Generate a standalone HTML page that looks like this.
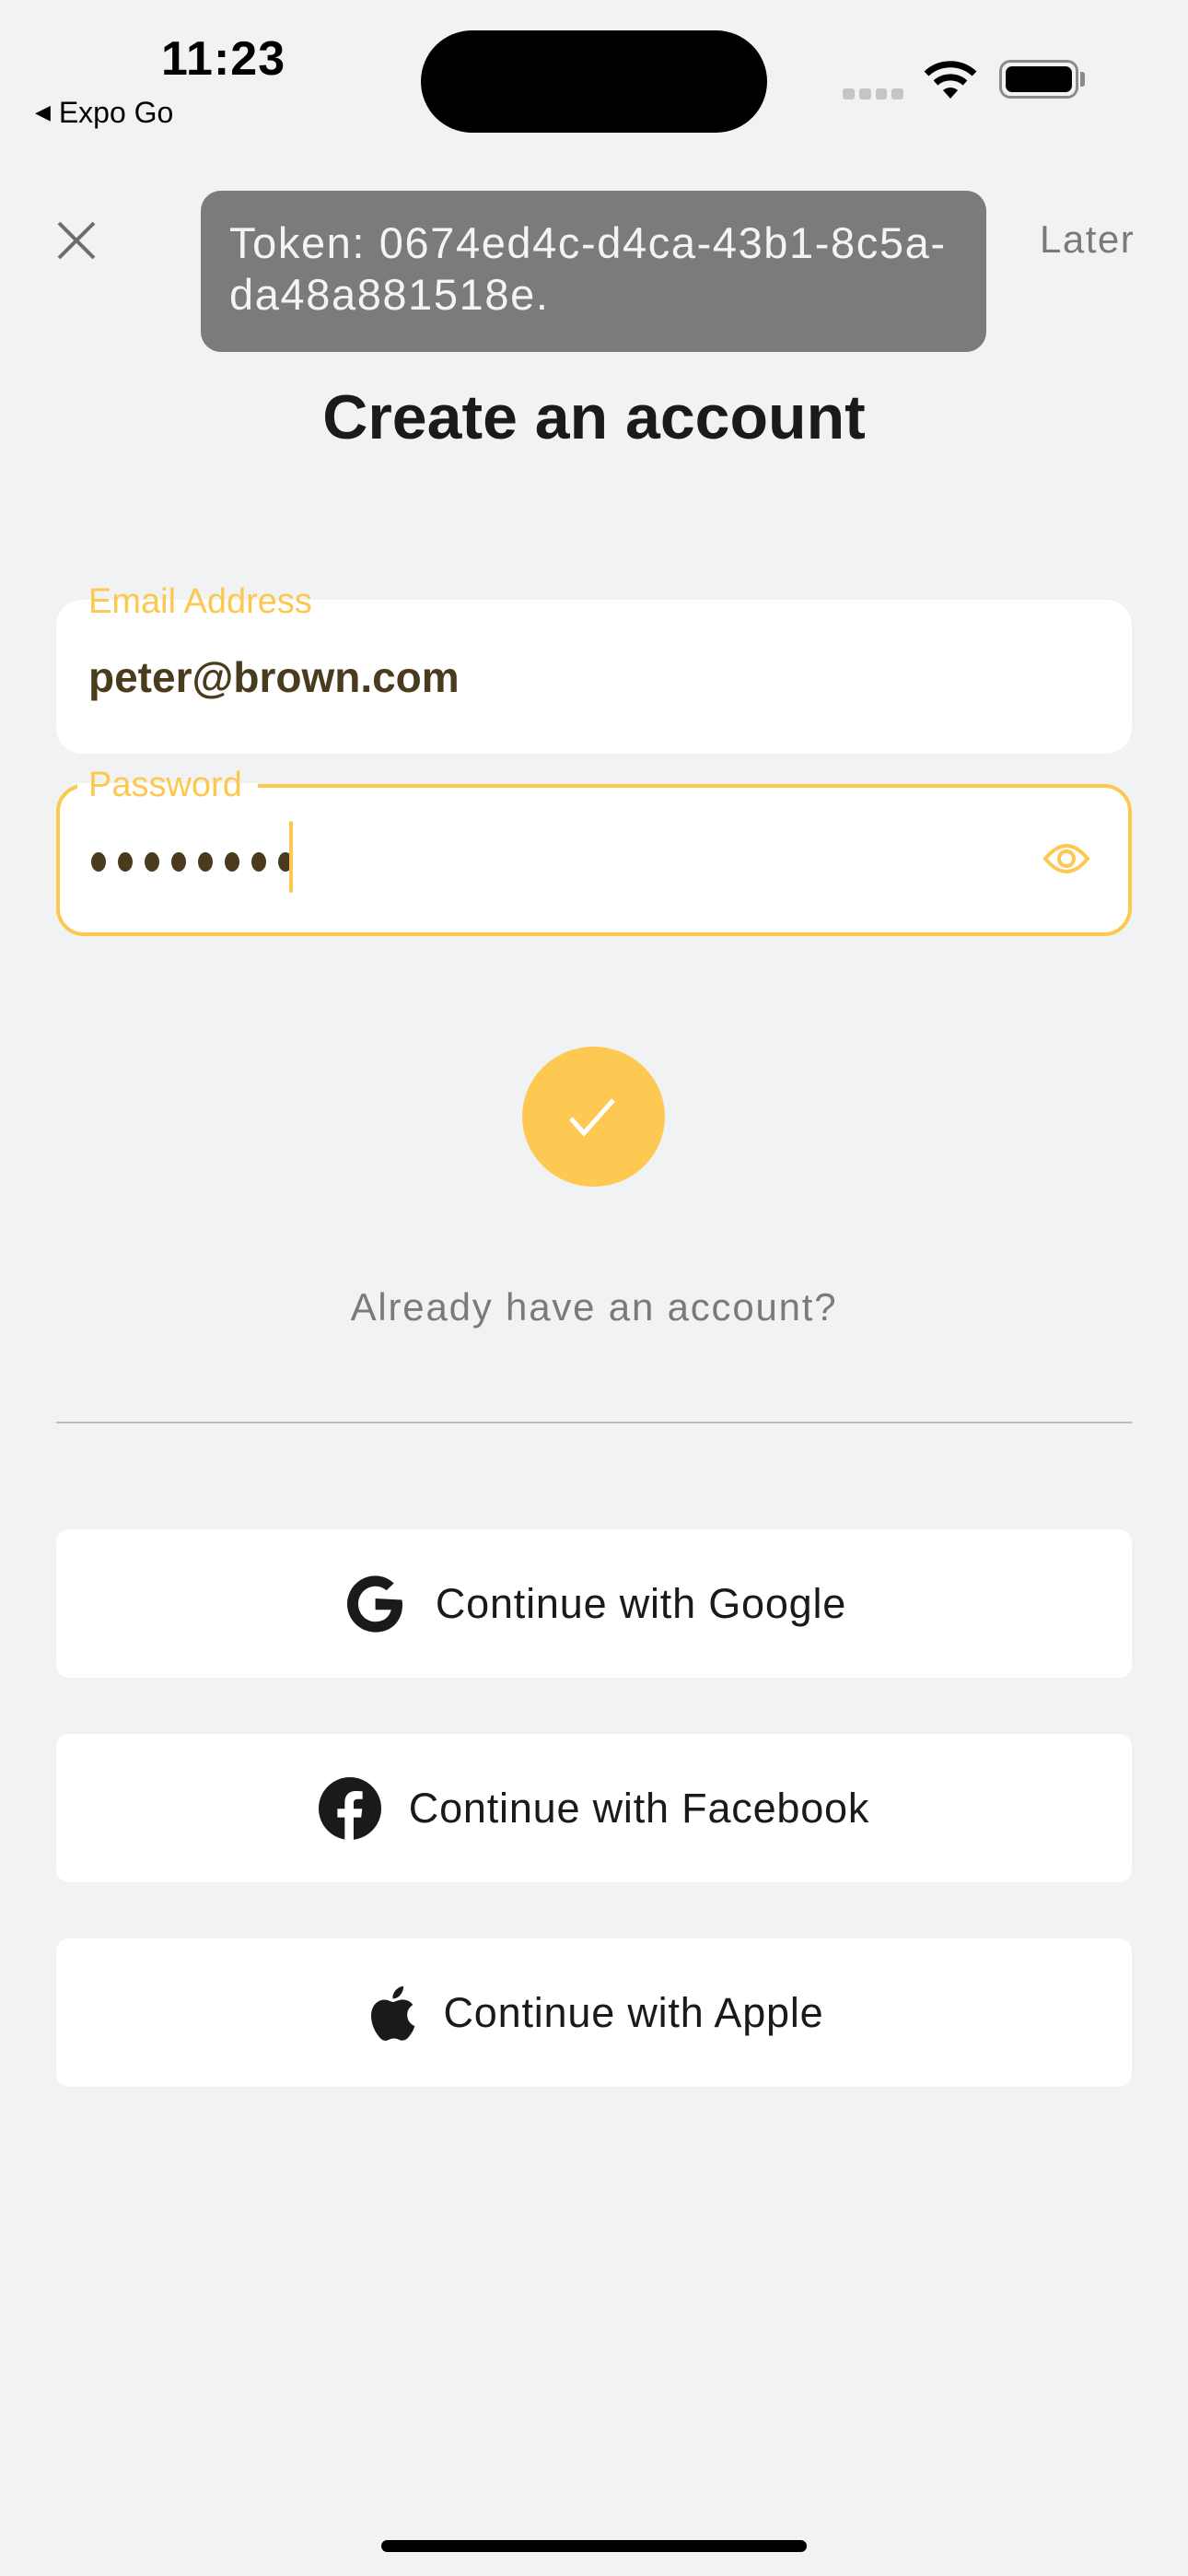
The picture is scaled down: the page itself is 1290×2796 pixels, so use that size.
<!DOCTYPE html>
<html><head><meta charset="utf-8"><style>
*{margin:0;padding:0;box-sizing:border-box}
body{width:1290px;height:2796px;background:#f1f2f4;position:relative;overflow:hidden;font-family:"Liberation Sans",sans-serif}
.a{position:absolute}
.btn{position:absolute;left:61px;width:1168px;height:161px;background:#fff;border-radius:14px;display:flex;align-items:center;justify-content:center;font-size:45px;letter-spacing:0.8px;color:#1a1a1a}
.btn svg{margin-right:30px}
</style></head><body>
<div class="a" style="left:175px;top:34px;font-size:52px;font-weight:bold;color:#000;letter-spacing:1px">11:23</div>
<div class="a" style="left:38px;top:104px;font-size:32px;color:#000"><span style="font-size:22px;position:relative;top:-4px">◀</span> Expo Go</div>
<div class="a" style="left:457px;top:33px;width:376px;height:111px;background:#000;border-radius:56px"></div>
<div class="a" style="left:915px;top:96px;width:66px;height:12px;display:flex;gap:5px"><span style="flex:1;background:#c5c5c5;border-radius:3px"></span><span style="flex:1;background:#c5c5c5;border-radius:3px"></span><span style="flex:1;background:#c5c5c5;border-radius:3px"></span><span style="flex:1;background:#c5c5c5;border-radius:3px"></span></div>
<svg class="a" style="left:1002px;top:64px" width="60" height="44" viewBox="0 0 60 44"><path d="M4 16 A38 38 0 0 1 56 16" stroke="#000" stroke-width="7" fill="none"/><path d="M14 26 A24 24 0 0 1 46 26" stroke="#000" stroke-width="7" fill="none"/><path d="M22 34 L30 43 L38 34 A12 12 0 0 0 22 34Z" fill="#000"/></svg>
<div class="a" style="left:1085px;top:65px;width:86px;height:42px;border:3px solid #8a8a8a;border-radius:12px;padding:4px"><div style="width:100%;height:100%;background:#000;border-radius:7px"></div></div>
<div class="a" style="left:1173px;top:78px;width:5px;height:16px;background:#8a8a8a;border-radius:0 3px 3px 0"></div>
<svg class="a" style="left:62px;top:240px" width="42" height="42" viewBox="0 0 42 42"><path d="M2 2L40 40M40 2L2 40" stroke="#6d6d6d" stroke-width="4"/></svg>
<div class="a" style="left:1129px;top:236px;font-size:42px;letter-spacing:1.5px;color:#7a7a7a">Later</div>
<div class="a" style="left:218px;top:207px;width:853px;height:175px;background:#7b7b7b;border-radius:22px;color:#f4f4f4;font-size:47px;letter-spacing:1.6px;line-height:56px;padding:29px 0 0 31px;white-space:nowrap">Token: 0674ed4c-d4ca-43b1-8c5a-<br>da48a881518e.</div>
<div class="a" style="left:0;top:414px;width:1290px;text-align:center;font-size:68px;color:#1a1a1a;font-weight:bold">Create an account</div>
<div class="a" style="left:61px;top:651px;width:1168px;height:167px;background:#fff;border-radius:28px"></div>
<div class="a" style="left:96px;top:632px;font-size:38px;color:#fdc84e">Email Address</div>
<div class="a" style="left:96px;top:708px;font-size:46px;color:#4a3b1e;font-weight:bold">peter@brown.com</div>
<div class="a" style="left:61px;top:851px;width:1168px;height:165px;background:#fff;border:4px solid #fdc84e;border-radius:30px"></div>
<div class="a" style="left:84px;top:840px;width:196px;height:20px;background:#f1f2f4"></div>
<div class="a" style="left:84px;top:850px;width:196px;height:10px;background:#fff"></div>
<div class="a" style="left:96px;top:831px;font-size:38px;color:#fdc84e">Password</div>
<div class="a" style="left:99px;top:925px;display:flex;gap:13px"><span style="width:16px;height:21px;border-radius:50%;background:#4a3b1e"></span><span style="width:16px;height:21px;border-radius:50%;background:#4a3b1e"></span><span style="width:16px;height:21px;border-radius:50%;background:#4a3b1e"></span><span style="width:16px;height:21px;border-radius:50%;background:#4a3b1e"></span><span style="width:16px;height:21px;border-radius:50%;background:#4a3b1e"></span><span style="width:16px;height:21px;border-radius:50%;background:#4a3b1e"></span><span style="width:16px;height:21px;border-radius:50%;background:#4a3b1e"></span><span style="width:16px;height:21px;border-radius:50%;background:#4a3b1e"></span></div>
<div class="a" style="left:314px;top:891px;width:4px;height:78px;background:#fdc84e;border-radius:2px"></div>
<svg class="a" style="left:1132px;top:912px" width="52" height="40" viewBox="0 0 52 40"><path d="M3 20 Q26 -8 49 20 Q26 48 3 20Z" stroke="#fdc84e" stroke-width="4" fill="none"/><circle cx="26" cy="20" r="8" stroke="#fdc84e" stroke-width="4" fill="none"/></svg>
<div class="a" style="left:567px;top:1136px;width:155px;height:152px;background:#fdc952;border-radius:50%"></div>
<svg class="a" style="left:616px;top:1190px" width="56" height="46" viewBox="0 0 56 46"><path d="M4 24L18 40L50 4" stroke="#fff" stroke-width="5" fill="none"/></svg>
<div class="a" style="left:0;top:1395px;width:1290px;text-align:center;font-size:42px;letter-spacing:1.8px;color:#7a7a7a">Already have an account?</div>
<div class="a" style="left:61px;top:1543px;width:1168px;height:2px;background:#bdbdbd"></div>
<div class="btn" style="top:1660px"><svg width="72" height="72" viewBox="0 0 24 24"><path fill="#1a1a1a" d="M12.2 10v4.1h5.7c-.3 1.5-1.7 4.3-5.7 4.3-3.4 0-6.2-2.8-6.2-6.4s2.8-6.4 6.2-6.4c1.9 0 3.2.8 4 1.5l2.7-2.6C17.2 2.9 14.9 1.8 12.2 1.8 6.6 1.8 2 6.4 2 12s4.6 10.2 10.2 10.2c5.9 0 9.8-4.1 9.8-10 0-.7-.1-1.2-.2-1.7z"/></svg>Continue with Google</div>
<div class="btn" style="top:1882px"><svg width="68" height="68" viewBox="0 0 24 24"><circle cx="12" cy="12" r="12" fill="#1a1a1a"/><path fill="#fff" d="M13.4 24v-8.6h2.9l.4-3.3h-3.3V10c0-1 .3-1.6 1.7-1.6h1.7V5.4c-.3 0-1.4-.1-2.6-.1-2.5 0-4.2 1.5-4.2 4.3v2.5H7.2v3.3H10V24z"/></svg>Continue with Facebook</div>
<div class="btn" style="top:2104px"><svg width="56" height="68" viewBox="0 0 20 24"><path fill="#1a1a1a" d="M16.5 12.7c0-2.6 2.1-3.8 2.2-3.9-1.2-1.8-3.1-2-3.7-2-1.6-.2-3.1.9-3.9.9s-2.1-.9-3.4-.9C5.9 6.8 4.3 7.8 3.4 9.4c-1.9 3.2-.5 8 1.3 10.6.9 1.3 1.900 2.7 3.3 2.7 1.3-.1 1.8-.9 3.4-.9s2 .9 3.4.8c1.4 0 2.3-1.3 3.2-2.6 1-1.5 1.4-2.9 1.4-3-.1 0-2.9-1.1-2.9-4.3zM13.9 4.9c.7-.9 1.2-2.1 1.1-3.3-1 0-2.3.7-3 1.6-.7.8-1.3 2-1.1 3.2 1.1.1 2.3-.6 3-1.5z"/></svg>Continue with Apple</div>
<div class="a" style="left:414px;top:2757px;width:462px;height:13px;background:#000;border-radius:7px"></div>
</body></html>
